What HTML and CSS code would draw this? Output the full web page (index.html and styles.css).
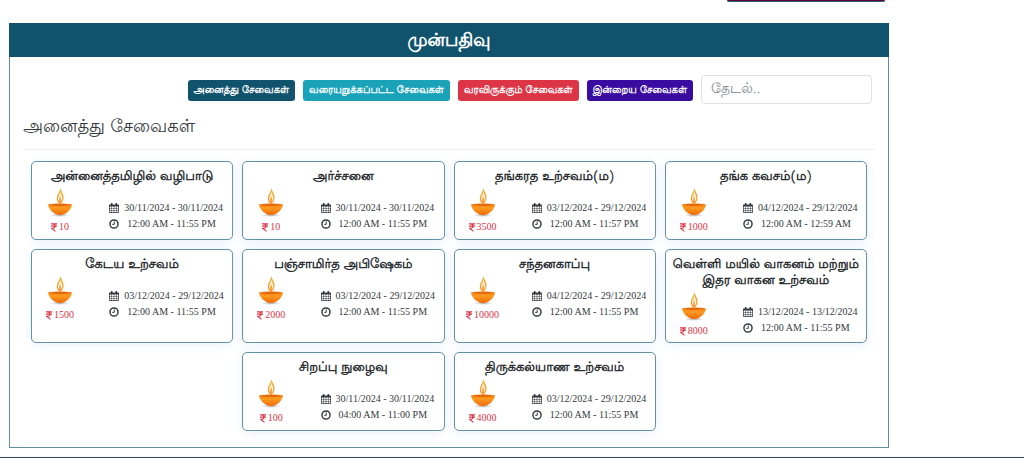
FILE: index.html
```html
<!DOCTYPE html>
<html lang="ta">
<head>
<meta charset="utf-8">
<meta name="viewport" content="width=device-width, initial-scale=1">
<title>முன்பதிவு</title>
<link rel="stylesheet" href="styles.css">
</head>
<body>
<svg class="sprite" aria-hidden="true">
  <defs>
    <linearGradient id="bowl" x1="0" y1="0" x2="0" y2="1">
      <stop offset="0" stop-color="#f07a12"/><stop offset=".4" stop-color="#fd9a1e"/><stop offset="1" stop-color="#ee690a"/>
    </linearGradient>
    <linearGradient id="flame" x1="0" y1="0" x2="0" y2="1">
      <stop offset="0" stop-color="#fbb83c"/><stop offset="1" stop-color="#f78a1a"/>
    </linearGradient>
    <radialGradient id="shade"><stop offset="0" stop-color="#6b5a50" stop-opacity=".6"/><stop offset="1" stop-color="#999" stop-opacity="0"/></radialGradient>
  </defs>
  <symbol id="lamp" viewBox="0 0 26 30">
    <ellipse cx="13" cy="28" rx="10" ry="2" fill="url(#shade)"/>
    <path d="M1 17.500C4 16 22 16 25 17.500C24.500 22 19.500 28 13 28S1.500 22 1 17.500Z" fill="url(#bowl)"/>
    <path d="M2.500 17.700C7 16.600 19 16.600 23.500 17.700C19 19.200 7 19.200 2.500 17.700Z" fill="#e0640c"/>
    <path d="M13.300 1C14.500 5 17 7.500 16.500 11.500C16.200 14 14.600 15.700 13 17C11 15.500 9.600 13.500 9.800 11.200C10 7.500 13 5 13.300 1Z" fill="url(#flame)"/>
    <path d="M13.300 4.500C14 7.500 15.800 9.500 15.300 12C15 13.500 14.200 14.500 13.100 15.200C11.800 14.200 10.900 13 11 11.300C11.200 9 13 7.500 13.300 4.500Z" fill="#fff6e0"/>
    <path d="M13.100 9C14.200 11.500 14.400 14 13.100 17.500C11.800 14 12 11.500 13.100 9Z" fill="#f79a2e"/>
  </symbol>
  <symbol id="rupee" viewBox="0 0 10 14">
    <path d="M0 1H10M0 4.800H10M1 1H3C8 1 8 8.200 3 8.200H1L7.500 13.500" fill="none" stroke="currentColor" stroke-width="1.900"/>
  </symbol>
  <symbol id="calendar" viewBox="0 0 14 14">
    <path fill-rule="evenodd" d="M1 2h1.500V1q0-1 1-1h.5q1 0 1 1v1h4V1q0-1 1-1h.5q1 0 1 1v1H13q1 0 1 1v10q0 1-1 1H1q-1 0-1-1V3q0-1 1-1ZM1 5v2h2.300V5ZM4 5v2h2.600V5ZM7.400 5v2H10V5ZM10.700 5v2H13V5ZM1 7.700V10h2.300V7.700ZM4 7.700V10h2.600V7.700ZM7.400 7.700V10H10V7.700ZM10.700 7.700V10H13V7.700ZM1 10.700V13h2.300v-2.300ZM4 10.700V13h2.600v-2.300ZM7.400 10.700V13H10v-2.300ZM10.700 10.700V13H13v-2.300Z"/>
  </symbol>
  <symbol id="clock" viewBox="0 0 14 14">
    <circle cx="7" cy="7" r="5.700" fill="none" stroke="currentColor" stroke-width="2"/>
    <path d="M7.300 3.500V7.500H4.500" fill="none" stroke="currentColor" stroke-width="1.400"/>
  </symbol>
</svg>

<div class="page">
  <div class="topbar"><div class="topbar-end"></div></div>
  <main class="panel">
    <h1 class="panel-title">முன்பதிவு</h1>
    <div class="panel-body">
      <form class="filters" role="search">
        <button type="button" class="btn btn-all">அனைத்து சேவைகள்</button>
        <button type="button" class="btn btn-limited">வரையறுக்கப்பட்ட சேவைகள்</button>
        <button type="button" class="btn btn-upcoming">வரவிருக்கும் சேவைகள்</button>
        <button type="button" class="btn btn-today">இன்றைய சேவைகள்</button>
        <input class="search" type="search" placeholder="தேடல்.." aria-label="தேடல்">
      </form>
      <h2 class="section-title">அனைத்து சேவைகள்</h2>
      <div class="cards" id="cards"></div>
    </div>
  </main>
</div>
<footer class="footer"></footer>
<script src="script.js"></script>
</body>
</html>
```
FILE: styles.css
```css
* { box-sizing: border-box; }

body {
  margin: 0;
  background: #fff;
  color: #343a40;
  font-family: "Lohit Tamil", "Noto Sans Tamil", "Noto Sans", sans-serif;
}

.sprite { position: absolute; width: 0; height: 0; }

.page { padding: 0 135px 9px 9px; }

.topbar { display: flex; justify-content: flex-end; padding: 0 4px 21px 0; }

.topbar-end {
  width: 158px;
  height: 2px;
  background: #5c0632;
  border-bottom: 1px solid #2b5a80;
  border-radius: 0 0 3px 3px;
}

.panel { border: 1px solid #5f919f; border-top: 0; }

.panel-title {
  margin: 0 -1px;
  padding: 6px 0 2px;
  background: #11536d;
  color: #fff;
  font-size: 18px;
  line-height: 26px;
  font-weight: 700;
  text-align: center;
}

.panel-body { padding: 18px 13px 16px; }

.filters { display: flex; justify-content: flex-end; align-items: center; gap: 8px; padding-right: 3px; }

.btn {
  height: 21px;
  margin-top: 2px;
  padding: 0 6px;
  border: 0;
  border-radius: 3px;
  color: #fff;
  font-family: inherit;
  font-size: 10px;
  font-weight: 700;
  line-height: 20px;
  white-space: nowrap;
}

.btn-all { background: #11536d; }
.btn-limited { background: #19a2b8; }
.btn-upcoming { background: #dc3546; }
.btn-today { background: #390ba0; }

.search {
  width: 171px;
  height: 29px;
  padding: 0 9px;
  border: 1px solid #dfe1e4;
  border-radius: 4px;
  background: #fff;
  font-family: inherit;
  font-size: 14px;
}

.search::placeholder { color: #7b848c; opacity: 1; }

.section-title {
  margin: 0 0 11px;
  padding: 9px 0 6px;
  border-bottom: 1px solid #ececec;
  font-size: 18px;
  font-weight: 400;
  line-height: 30px;
}

.cards { display: flex; flex-wrap: wrap; justify-content: center; gap: 9px; padding: 0 8px; }

.card {
  flex: 0 0 calc((100% - 27px) / 4);
  min-height: 79px;
  padding: 7px 0 3px;
  border: 1px solid #5f91a8;
  border-radius: 5px;
  background: #fff;
  box-shadow: 0 2px 12px #e9effb;
}

.card-title { margin: 0 0 2px; color: #2b2f33; font-size: 13px; font-weight: 700; line-height: 16px; text-align: center; }

.card-row { display: flex; justify-content: space-between; padding: 0 5px 0 11px; font-family: "Liberation Serif", serif; }

.offer { display: flex; flex-direction: column; align-items: center; gap: 2px; width: 34px; color: #dc3546; }

.lamp { width: 26px; height: 30px; }

.price { display: flex; align-items: center; gap: 2px; margin: 0; font-size: 10px; line-height: 16px; }

.rupee { width: 6px; height: 9px; }

.times { margin: 0; padding: 13px 0 0; list-style: none; font-size: 10px; line-height: 16px; width: 118px; }

.times li { display: flex; align-items: center; gap: 5px; white-space: nowrap; }

.times .time { gap: 8px; }

.icon { width: 10px; height: 10px; fill: currentColor; }

.footer { height: 2px; background: #2f4663; }
```
FILE: script.js
```js
const services = [
  ["அன்னைத்தமிழில் வழிபாடு", 10, "30/11/2024 - 30/11/2024", "12:00 AM - 11:55 PM"],
  ["அர்ச்சனை", 10, "30/11/2024 - 30/11/2024", "12:00 AM - 11:55 PM"],
  ["தங்கரத உற்சவம்(ம)", 3500, "03/12/2024 - 29/12/2024", "12:00 AM - 11:57 PM"],
  ["தங்க கவசம்(ம)", 1000, "04/12/2024 - 29/12/2024", "12:00 AM - 12:59 AM"],
  ["கேடய உற்சவம்", 1500, "03/12/2024 - 29/12/2024", "12:00 AM - 11:55 PM"],
  ["பஞ்சாமிர்த அபிஷேகம்", 2000, "03/12/2024 - 29/12/2024", "12:00 AM - 11:55 PM"],
  ["சந்தனகாப்பு", 10000, "04/12/2024 - 29/12/2024", "12:00 AM - 11:55 PM"],
  ["வெள்ளி மயில் வாகனம் மற்றும் இதர வாகன உற்சவம்", 8000, "13/12/2024 - 13/12/2024", "12:00 AM - 11:55 PM"],
  ["சிறப்பு நுழைவு", 100, "30/11/2024 - 30/11/2024", "04:00 AM - 11:00 PM"],
  ["திருக்கல்யாண உற்சவம்", 4000, "03/12/2024 - 29/12/2024", "12:00 AM - 11:55 PM"]
];

document.getElementById("cards").innerHTML = services.map(([name, price, dates, hours]) => `
  <article class="card">
    <h3 class="card-title">${name}</h3>
    <div class="card-row">
      <div class="offer">
        <svg class="lamp" aria-hidden="true"><use href="#lamp"/></svg>
        <p class="price"><svg class="rupee" aria-hidden="true"><use href="#rupee"/></svg>${price}</p>
      </div>
      <ul class="times">
        <li><svg class="icon" aria-hidden="true"><use href="#calendar"/></svg>${dates}</li>
        <li class="time"><svg class="icon" aria-hidden="true"><use href="#clock"/></svg>${hours}</li>
      </ul>
    </div>
  </article>`).join("");
```
